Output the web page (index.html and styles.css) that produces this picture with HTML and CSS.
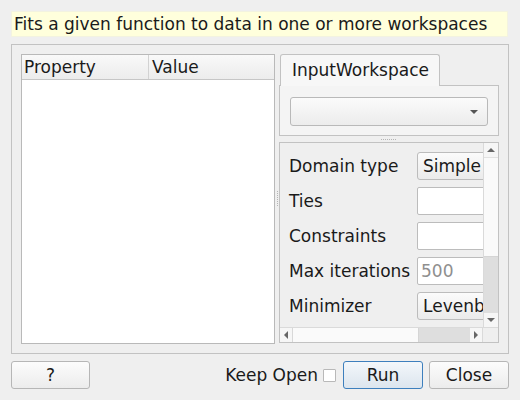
FILE: index.html
```html
<!DOCTYPE html>
<html>
<head>
<meta charset="utf-8">
<link rel="stylesheet" href="styles.css">
</head>
<body>
<div class="dialog">
  <div class="desc">Fits a given function to data in one or more workspaces</div>
  <div class="group">
    <div class="table">
      <div class="thead">
        <div class="th th-prop">Property</div>
        <div class="th th-val">Value</div>
      </div>
      <div class="tbody"></div>
    </div>
    <div class="vsplit"><span class="vdots"></span></div>
    <div class="right">
      <div class="tabs">
        <div class="tabbar"><div class="tab">InputWorkspace</div></div>
        <div class="tabpanel">
          <div class="combo wide"><span class="arrow"></span></div>
        </div>
      </div>
      <div class="hsplit"><span class="hdots"></span></div>
      <div class="scroll">
        <div class="scroll-main">
          <div class="viewport">
            <div class="form">
              <div class="row"><span class="lbl">Domain type</span><span class="fld combo-f">Simple</span></div>
              <div class="row"><span class="lbl">Ties</span><span class="fld edit"></span></div>
              <div class="row"><span class="lbl">Constraints</span><span class="fld edit"></span></div>
              <div class="row"><span class="lbl">Max iterations</span><span class="fld edit ph">500</span></div>
              <div class="row"><span class="lbl">Minimizer</span><span class="fld combo-f">Levenb</span></div>
              <div class="row"><span class="lbl"></span><span class="fld combo-f"></span></div>
            </div>
          </div>
          <div class="vbar">
            <div class="sbtn"><span class="tri up"></span></div>
            <div class="vhandle"></div>
            <div class="vgroove"></div>
            <div class="sbtn"><span class="tri down"></span></div>
          </div>
        </div>
        <div class="hbar-row">
          <div class="hbar">
            <div class="sbtn-h"><span class="tri left"></span></div>
            <div class="hhandle"></div>
            <div class="hgroove"></div>
            <div class="sbtn-h"><span class="tri right"></span></div>
          </div>
          <div class="corner"></div>
        </div>
      </div>
    </div>
  </div>
  <div class="footer">
    <button class="btn help">?</button>
    <div class="spacer"></div>
    <span class="keep">Keep Open</span>
    <span class="check"></span>
    <button class="btn run">Run</button>
    <button class="btn close">Close</button>
  </div>
</div>
</body>
</html>
```

FILE: styles.css
```css
html, body {
  margin: 0;
  padding: 0;
  background: #efefef;
  font-family: "DejaVu Sans", sans-serif;
  font-size: 17px;
  color: #1a1a1a;
}
.dialog {
  width: 520px;
  height: 400px;
  box-sizing: border-box;
  padding: 11px 11px 0 11px;
  display: flex;
  flex-direction: column;
}
.desc {
  height: 26px;
  width: 497px;
  box-sizing: border-box;
  background: #ffffdc;
  border: 1px solid #f3f3e0;
  padding-left: 2px;
  line-height: 24px;
  white-space: nowrap;
  overflow: hidden;
}
.group {
  margin-top: 7px;
  height: 310px;
  box-sizing: border-box;
  border: 1px solid #c2c2c2;
  padding: 9px;
  display: flex;
}
.table {
  width: 254px;
  height: 290px;
  box-sizing: border-box;
  border: 1px solid #b9b9b9;
  background: #fff;
  display: flex;
  flex-direction: column;
}
.thead {
  height: 25px;
  display: flex;
  background: linear-gradient(#f9f9f9, #ececec);
  border-bottom: 1px solid #c6c6c6;
  box-sizing: border-box;
}
.th {
  line-height: 24px;
  padding-left: 2px;
  white-space: nowrap;
}
.th-prop {
  width: 124px;
  border-right: 1px solid #d2d2d2;
}
.th-val { flex: 1; padding-left: 3px; }
.tbody { flex: 1; }
.vsplit {
  width: 4px;
  display: flex;
  align-items: center;
  justify-content: center;
}
.vdots {
  width: 1px;
  height: 16px;
  background: repeating-linear-gradient(#b5b5b5 0 1px, transparent 1px 2px);
}
.right {
  width: 220px;
  display: flex;
  flex-direction: column;
}
.tabs { display: flex; flex-direction: column; }
.tabbar { display: flex; height: 31px; }
.tab {
  margin-left: 1px;
  width: 160px;
  box-sizing: border-box;
  height: 32px;
  border: 1px solid #c2c2c2;
  border-bottom: none;
  border-radius: 3px 3px 0 0;
  background: #f7f7f7;
  padding-left: 11px;
  line-height: 31px;
  position: relative;
  z-index: 1;
}
.tabpanel {
  height: 51px;
  box-sizing: border-box;
  border: 1px solid #c2c2c2;
  background: #f4f4f4;
  padding: 11px 10px 10px 10px;
}
.combo.wide {
  height: 29px;
  box-sizing: border-box;
  border: 1px solid #b9b9b9;
  border-radius: 3px;
  background: linear-gradient(#fbfbfb, #ececec);
  position: relative;
}
.arrow {
  position: absolute;
  right: 9px;
  top: 12px;
  width: 0;
  height: 0;
  border-left: 4px solid transparent;
  border-right: 4px solid transparent;
  border-top: 4px solid #555;
}
.hsplit {
  height: 6px;
  display: flex;
  justify-content: center;
  align-items: center;
}
.hdots {
  width: 16px;
  height: 1px;
  background: repeating-linear-gradient(90deg, #b5b5b5 0 1px, transparent 1px 2px);
}
.scroll {
  height: 201px;
  box-sizing: border-box;
  border: 1px solid #c2c2c2;
  display: flex;
  flex-direction: column;
}
.scroll-main { flex: 1; display: flex; min-height: 0; }
.viewport {
  flex: 1;
  overflow: hidden;
}
.form {
  padding: 9px 0 0 9px;
  display: flex;
  flex-direction: column;
  gap: 7px;
}
.row {
  display: flex;
  align-items: center;
  height: 28px;
}
.lbl {
  width: 128px;
  flex: none;
  white-space: nowrap;
}
.fld {
  flex: none;
  width: 200px;
  height: 28px;
  box-sizing: border-box;
  border: 1px solid #bcbcbc;
  border-radius: 3px;
  padding-left: 5px;
  line-height: 26px;
  white-space: nowrap;
  overflow: hidden;
}
.combo-f { background: linear-gradient(#fbfbfb, #ebebeb); }
.edit { background: #fff; border-radius: 2px; }
.ph { color: #8f8f8f; padding-left: 3px; }
.vbar {
  width: 14px;
  display: flex;
  flex-direction: column;
  border-left: 1px solid #dadada;
  background: #f6f6f6;
}
.sbtn {
  height: 14px;
  display: flex;
  align-items: center;
  justify-content: center;
}
.vhandle {
  flex: 102;
  background: #fafafa;
  border-top: 1px solid #e2e2e2;
  border-bottom: 1px solid #d5d5d5;
}
.vgroove { flex: 58; background: #dedede; }
.hbar-row { height: 14px; display: flex; border-top: 1px solid #dadada; }
.hbar { flex: 1; display: flex; background: #f6f6f6; }
.sbtn-h {
  width: 12px;
  display: flex;
  align-items: center;
  justify-content: center;
}
.hhandle {
  flex: 126;
  background: #fafafa;
  border-left: 1px solid #d8d8d8;
  border-right: 1px solid #d5d5d5;
}
.hgroove { flex: 52; background: #dedede; }
.corner { width: 15px; background: #efefef; border-left: 1px solid #dadada; }
.tri { width: 0; height: 0; }
.tri.up { border-left: 4px solid transparent; border-right: 4px solid transparent; border-bottom: 4px solid #666; }
.tri.down { border-left: 4px solid transparent; border-right: 4px solid transparent; border-top: 4px solid #666; }
.tri.left { border-top: 4px solid transparent; border-bottom: 4px solid transparent; border-right: 4px solid #666; }
.tri.right { border-top: 4px solid transparent; border-bottom: 4px solid transparent; border-left: 4px solid #666; }
.footer {
  margin-top: 7px;
  height: 28px;
  display: flex;
  align-items: center;
}
.spacer { flex: 1; }
.btn {
  height: 28px;
  width: 80px;
  box-sizing: border-box;
  border: 1px solid #b6b6b6;
  border-radius: 3px;
  background: linear-gradient(#fcfcfc, #ececec);
  font-family: "DejaVu Sans", sans-serif;
  font-size: 17px;
  line-height: 24px;
  color: #1a1a1a;
  padding: 0;
}
.help { width: 79px; }
.keep { margin-right: 5px; white-space: nowrap; }
.check {
  width: 13px;
  height: 13px;
  box-sizing: border-box;
  border: 1px solid #b9b9b9;
  background: #fff;
  border-radius: 1px;
  margin-right: 7px;
}
.run {
  border-color: #3d7fbd;
  background: linear-gradient(#f3f7fb, #dce5ee);
  margin-right: 6px;
}
```
